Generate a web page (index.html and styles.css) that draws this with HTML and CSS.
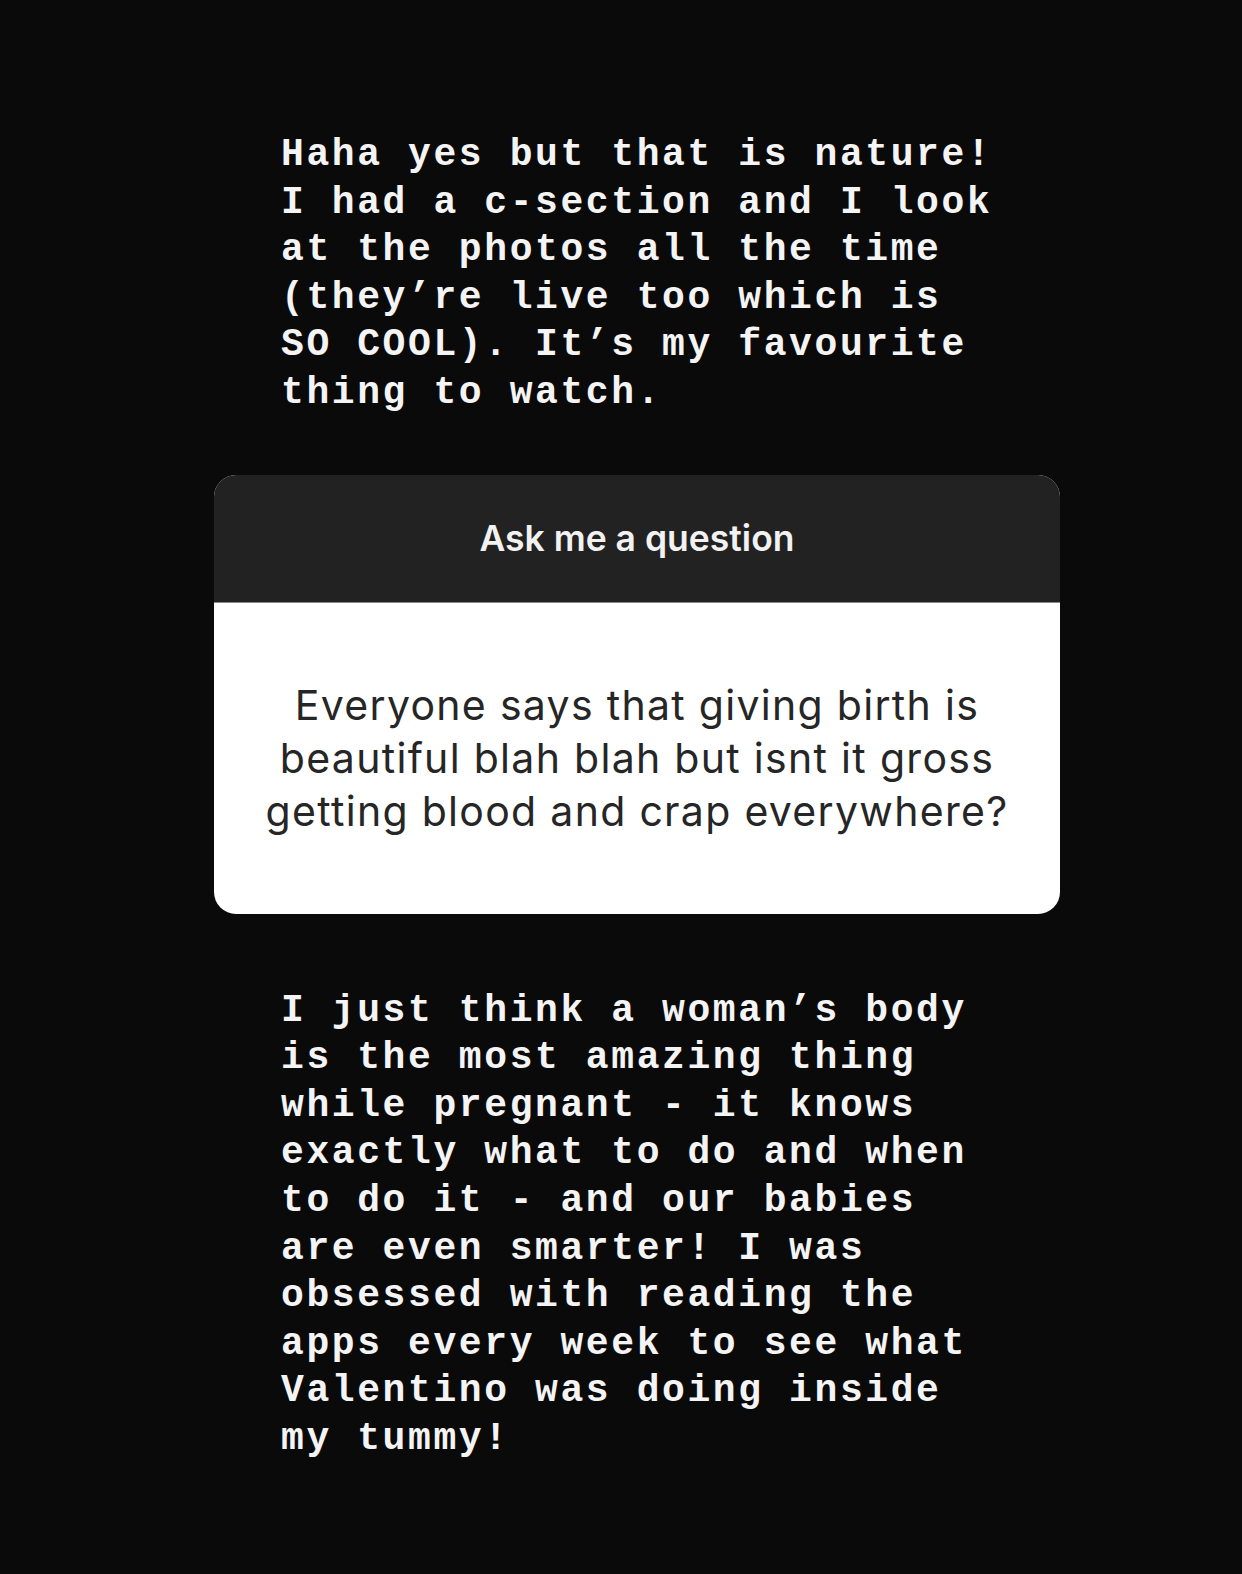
FILE: index.html
```html
<!DOCTYPE html>
<html>
<head>
  <title>Story</title>
<link rel="stylesheet" href="styles.css">
</head>
<body>
  <div class="story">
    <p class="note note-top">Haha yes but that is nature!<br>I had a c-section and I look<br>at the photos all the time<br>(they’re live too which is<br>SO COOL). It’s my favourite<br>thing to watch.</p>

    <div class="question-card">
      <div class="question-head">Ask me a question</div>
      <div class="question-body">
        <p>Everyone says that giving birth is<br>beautiful blah blah but isnt it gross<br>getting blood and crap everywhere?</p>
      </div>
    </div>

    <p class="note note-bottom">I just think a woman’s body<br>is the most amazing thing<br>while pregnant - it knows<br>exactly what to do and when<br>to do it - and our babies<br>are even smarter! I was<br>obsessed with reading the<br>apps every week to see what<br>Valentino was doing inside<br>my tummy!</p>
  </div>
</body>
</html>
```

FILE: styles.css
```css
body {
  margin: 0;
  min-height: 100vh;
  background: #0b0a0b;
  color: #f4f4f4;
}

.story {
  padding-top: 131px;
  padding-bottom: 60px;
}

.note {
  margin: 0;
  padding-left: 281px;
  font-family: "Liberation Mono", "Courier New", monospace;
  font-weight: bold;
  font-size: 38px;
  letter-spacing: 2.6px;
  line-height: 47.6px;
  white-space: nowrap;
}

.question-card {
  width: 846px;
  margin: 58px 0 0 214px;
  border-radius: 22px;
  overflow: hidden;
  background: #fff;
}

.question-head {
  height: 127px;
  background: #222222;
  display: flex;
  align-items: center;
  justify-content: center;
  font-family: Inter, "Noto Sans", sans-serif;
  font-weight: 600;
  font-size: 35.5px;
  color: #f2f2f2;
  border-bottom: 1px solid #8a8a8a;
}

.question-body {
  height: 311px;
  display: flex;
  align-items: center;
  justify-content: center;
}

.question-body p {
  margin: 0;
  text-align: center;
  font-family: Inter, "Noto Sans", sans-serif;
  font-size: 41px;
  line-height: 53px;
  color: #262626;
  letter-spacing: 1.3px;
}

.note-bottom {
  margin-top: 73px;
}
```
